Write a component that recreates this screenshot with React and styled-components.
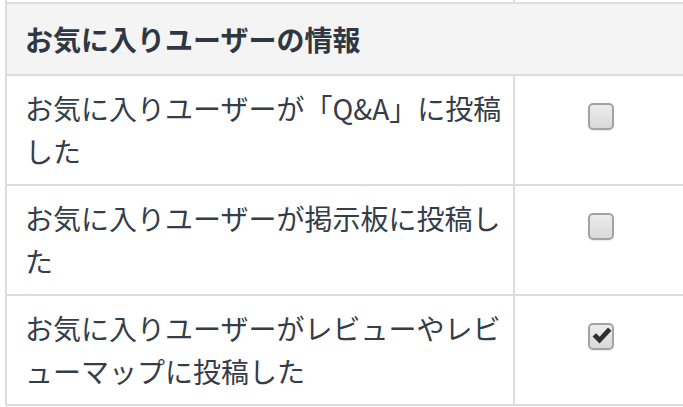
import React from 'react';
import styled, { createGlobalStyle } from 'styled-components';

const GlobalStyle = createGlobalStyle`
    body {
        margin: 0;
        background: #fff;
        font-family: "Noto Sans CJK JP", "Noto Sans", sans-serif;
        overflow: hidden;
    }
`;

const Table = styled.div`
    margin-left: 5px;
    width: 680px;
    border-left: 2px solid #dddddd;
    color: #353d48;
`;

const Row = styled.div`
    display: grid;
    grid-template-columns: 508px 1fr;
    border-bottom: 2px solid #dddddd;
`;

const Cell = styled.div`
    border-right: ${p => (p.divider ? '2px solid #dddddd' : 'none')};
    height: ${p => p.h || 108}px;
    box-sizing: border-box;
`;

const Label = styled(Cell)`
    padding: 11px 10px 11px 18px;
    font-size: 28px;
    line-height: 43px;
    line-break: normal;
`;

const CheckCell = styled(Cell)`
    display: flex;
    justify-content: center;
    align-items: flex-start;
    padding-top: 27px;
`;

const Header = styled.div`
    height: 70px;
    padding-left: 18px;
    display: flex;
    align-items: center;
    background: #f4f4f4;
    border-bottom: 2px solid #dddddd;
    font-size: 28px;
    font-weight: 700;
    color: #2e3742;
`;

const Box = styled.span`
    position: relative;
    width: 26px;
    height: 27px;
    box-sizing: border-box;
    border: 2px solid #a3a3a3;
    border-radius: 5px;
    background: linear-gradient(#ececec, #d9d9d9);
    box-shadow: 0 1px 1px rgba(0, 0, 0, 0.08);
    svg {
        position: absolute;
        left: 1px;
        top: 1px;
    }
`;

const Checkbox = ({ checked }) => (
    <Box>
        {checked && (
            <svg width="22" height="20" viewBox="0 0 22 20">
                <path d="M1.5 10.5 L5 7.2 L8.6 10.8 L17 1.5 L20.5 4.8 L8.6 17.5 Z" fill="#2f2f2f" />
            </svg>
        )}
    </Box>
);

const items = [
    { text: 'お気に入りユーザーが「Q&A」に投稿した', checked: false },
    { text: 'お気に入りユーザーが掲示板に投稿した', checked: false },
    { text: 'お気に入りユーザーがレビューやレビューマップに投稿した', checked: true },
];

const App = () => {
    return (
        <>
            <GlobalStyle />
            <Table>
                <Row>
                    <Cell divider h={2} />
                    <Cell h={2} />
                </Row>
                <Header>お気に入りユーザーの情報</Header>
                {items.map(item => (
                    <Row key={item.text}>
                        <Label divider>{item.text}</Label>
                        <CheckCell>
                            <Checkbox checked={item.checked} />
                        </CheckCell>
                    </Row>
                ))}
            </Table>
        </>
    );
};

export default App;
